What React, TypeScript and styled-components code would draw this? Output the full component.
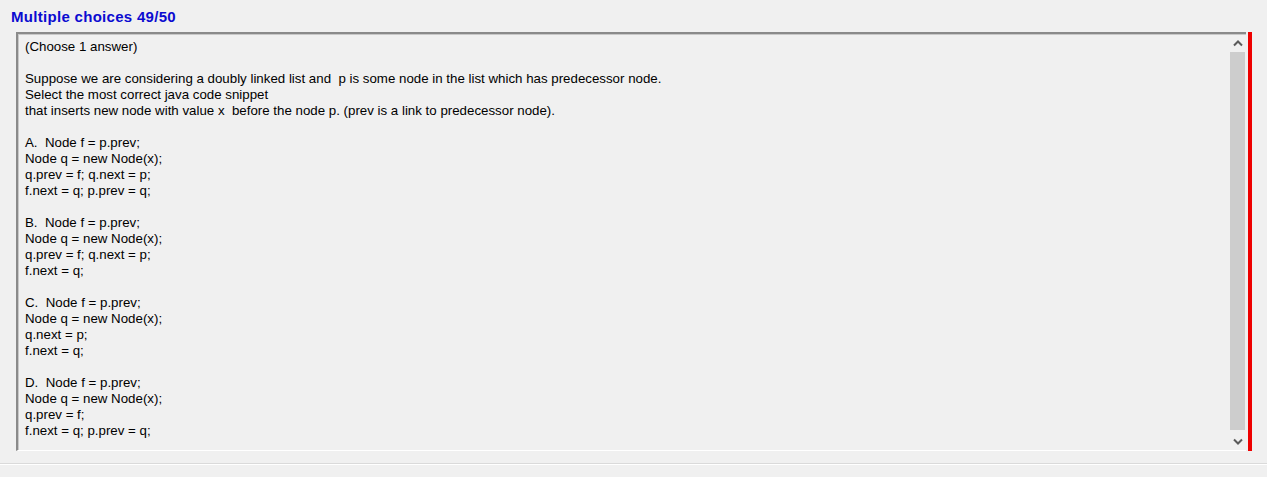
import React from 'react'
import styled, { createGlobalStyle } from 'styled-components'

const Global = createGlobalStyle`
    html, body {
        margin: 0;
        padding: 0;
        background: #f0f0f0;
        overflow: hidden;
    }
    body {
        width: 1267px;
        height: 477px;
        font-family: Arial, 'Liberation Sans', sans-serif;
    }
`

const Page = styled.div`
    display: flex;
    flex-direction: column;
    height: 477px;
    background: #f0f0f0;
`

const Title = styled.div`
    height: 32px;
    padding: 8px 0 0 11px;
    box-sizing: border-box;
    font-size: 15px;
    letter-spacing: 0.3px;
    font-weight: bold;
    color: #0b0bd0;
    line-height: 17px;
`

const Row = styled.div`
    display: flex;
    gap: 2px;
    padding: 0 15px 0 16px;
    height: 419px;
`

const Frame = styled.div`
    flex: 1;
    display: flex;
    min-width: 0;
    border-top: 2px solid #8a8a8a;
    border-left: 2px solid #8a8a8a;
    border-bottom: 1px solid #ffffff;
    box-shadow: inset 1px 1px 0 #c8c8c8;
    background: #f0f0f0;
`

const Content = styled.div`
    flex: 1;
    overflow: hidden;
    padding: 5px 0 0 7px;
    font-size: 13.3px;
    line-height: 16px;
    color: #000;
    white-space: pre;
`

const Para = styled.div`
    margin-bottom: 16px;
`

const Scrollbar = styled.div`
    width: 17px;
    display: flex;
    flex-direction: column;
    background: #f0f0f0;
    margin-top: 1px;
`

const ArrowBtn = styled.div`
    height: 17px;
    display: flex;
    align-items: center;
    justify-content: center;
`

const Track = styled.div`
    flex: 1;
    display: flex;
    flex-direction: column;
    padding-bottom: 3px;
`

const Thumb = styled.div`
    flex: 1;
    margin: 0 1px;
    background: #cdcdcd;
`

const RedBar = styled.div`
    width: 4px;
    background: #ee0000;
`

const Footer = styled.div`
    flex: 1;
    margin-top: 12px;
    border-top: 1px solid #dadada;
    box-shadow: inset 0 1px 0 #ffffff;
    background: #f0f0f0;
`

const Chevron = ({ up }: { up?: boolean }) => (
    <svg width="10" height="7" viewBox="0 0 10 7">
        <path
            d={up ? 'M1 5.5 L5 1.5 L9 5.5' : 'M1 1.5 L5 5.5 L9 1.5'}
            fill="none"
            stroke="#5a5a5a"
            strokeWidth="2"
        />
    </svg>
)

const paragraphs = [
    ['(Choose 1 answer)'],
    [
        'Suppose we are considering a doubly linked list and  p is some node in the list which has predecessor node.',
        'Select the most correct java code snippet',
        'that inserts new node with value x  before the node p. (prev is a link to predecessor node).',
    ],
    ['A.  Node f = p.prev;', 'Node q = new Node(x);', 'q.prev = f; q.next = p;', 'f.next = q; p.prev = q;'],
    ['B.  Node f = p.prev;', 'Node q = new Node(x);', 'q.prev = f; q.next = p;', 'f.next = q;'],
    ['C.  Node f = p.prev;', 'Node q = new Node(x);', 'q.next = p;', 'f.next = q;'],
    ['D.  Node f = p.prev;', 'Node q = new Node(x);', 'q.prev = f;', 'f.next = q; p.prev = q;'],
]

export default function App() {
    return (
        <Page>
            <Global />
            <Title>Multiple choices 49/50</Title>
            <Row>
                <Frame>
                    <Content>
                        {paragraphs.map((lines, i) => (
                            <Para key={i}>
                                {lines.map((l, j) => (
                                    <div key={j}>{l}</div>
                                ))}
                            </Para>
                        ))}
                    </Content>
                    <Scrollbar>
                        <ArrowBtn>
                            <Chevron up />
                        </ArrowBtn>
                        <Track>
                            <Thumb />
                        </Track>
                        <ArrowBtn>
                            <Chevron />
                        </ArrowBtn>
                    </Scrollbar>
                </Frame>
                <RedBar />
            </Row>
            <Footer />
        </Page>
    )
}
